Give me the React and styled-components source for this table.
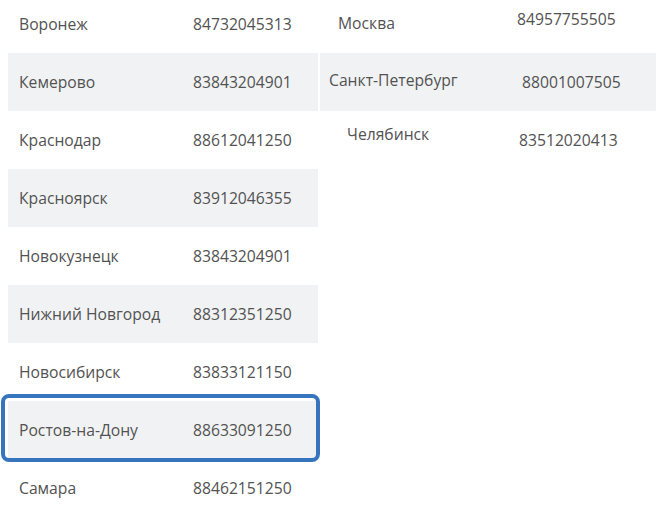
import React from 'react';
import styled, { createGlobalStyle } from 'styled-components';

const GlobalStyle = createGlobalStyle`
  html, body {
    margin: 0;
    padding: 0;
    background: #ffffff;
  }
  body {
    font-family: 'Open Sans', 'Noto Sans', sans-serif;
    width: 656px;
    height: 527px;
    overflow: hidden;
  }
`;

const Page = styled.div`
  display: flex;
  align-items: flex-start;
  gap: 2px;
  padding-left: 8px;
  margin-top: -5px;
`;

const Table = styled.div`
  display: flex;
  flex-direction: column;
  width: ${(p) => p.$width};
  flex: ${(p) => (p.$grow ? 1 : 'none')};
`;

const Row = styled.div`
  position: relative;
  display: grid;
  grid-template-columns: ${(p) => p.$cols};
  align-items: center;
  height: 58px;
  background: ${(p) => (p.$shaded ? '#f1f2f4' : 'transparent')};
  color: #525252;
  font-size: 15.7px;

  ${(p) =>
    p.$selected &&
    `
    &::after {
      content: '';
      position: absolute;
      top: -7px;
      left: -7px;
      right: -2px;
      bottom: -3px;
      border: 4px solid #3674bd;
      border-radius: 8px;
      pointer-events: none;
    }
  `}
`;

const Cell = styled.div`
  padding-left: ${(p) => p.$indent || 0}px;
  padding-bottom: ${(p) => (p.$lift || 0) * 2}px;
  white-space: nowrap;
`;

const leftRows = [
  ['Воронеж', '84732045313'],
  ['Кемерово', '83843204901'],
  ['Краснодар', '88612041250'],
  ['Красноярск', '83912046355'],
  ['Новокузнецк', '83843204901'],
  ['Нижний Новгород', '88312351250'],
  ['Новосибирск', '83833121150'],
  ['Ростов-на-Дону', '88633091250'],
  ['Самара', '88462151250'],
];

const rightRows = [
  { city: 'Москва', phone: '84957755505', ci: 18, pi: 7, cl: 1, pl: 5 },
  { city: 'Санкт-Петербург', phone: '88001007505', ci: 9, pi: 12, cl: 2, pl: 0 },
  { city: 'Челябинск', phone: '83512020413', ci: 27, pi: 9, cl: 6, pl: 0 },
];

const App = () => {
  return (
    <>
      <GlobalStyle />
      <Page>
        <Table $width="310px">
          {leftRows.map(([city, phone], i) => (
            <Row
              key={city}
              $cols="185px 1fr"
              $shaded={i % 2 === 1}
              $selected={city === 'Ростов-на-Дону'}
            >
              <Cell $indent={11}>{city}</Cell>
              <Cell>{phone}</Cell>
            </Row>
          ))}
        </Table>
        <Table $grow>
          {rightRows.map((r, i) => (
            <Row key={r.city} $cols="190px 1fr" $shaded={i % 2 === 1}>
              <Cell $indent={r.ci} $lift={r.cl}>{r.city}</Cell>
              <Cell $indent={r.pi} $lift={r.pl}>{r.phone}</Cell>
            </Row>
          ))}
        </Table>
      </Page>
    </>
  );
};

export default App;
